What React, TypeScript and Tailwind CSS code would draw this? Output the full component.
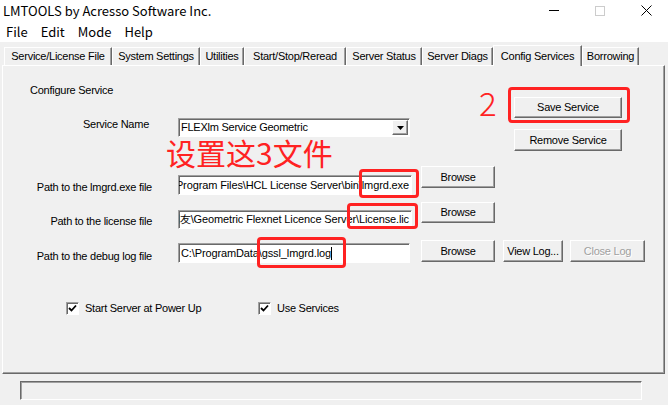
import React from "react";

const ui = "font-['Liberation_Sans',Arial,sans-serif]";
const raised =
  "border border-t-white border-l-white border-r-[#696969] border-b-[#696969] shadow-[inset_-1px_-1px_0_#a0a0a0] bg-[#f0f0f0]";
const sunken =
  "border border-t-[#a0a0a0] border-l-[#a0a0a0] border-r-white border-b-white shadow-[inset_1px_1px_0_#696969] bg-white";

const tabs = [
  { label: "Service/License File", w: "w-[108px]" },
  { label: "System Settings", w: "w-[88px]" },
  { label: "Utilities", w: "w-[44px]" },
  { label: "Start/Stop/Reread", w: "w-[102px]" },
  { label: "Server Status", w: "w-[76px]" },
  { label: "Server Diags", w: "w-[71px]" },
  { label: "Config Services", w: "w-[89px]", active: true },
  { label: "Borrowing", w: "w-[57px]" },
];

const Btn = ({
  children,
  className = "",
  disabled = false,
}: {
  children: React.ReactNode;
  className?: string;
  disabled?: boolean;
}) => (
  <div
    className={`${raised} flex items-center justify-center text-[11px] shrink-0 ${
      disabled ? "text-[#a0a0a0] [text-shadow:1px_1px_0_#ffffff]" : "text-black"
    } ${className}`}
  >
    {children}
  </div>
);

const Check = ({ label, className = "" }: { label: string; className?: string }) => (
  <div className={`flex items-center ${className}`}>
    <div className={`${sunken} w-[13px] h-[13px] flex items-center justify-center`}>
      <svg width="9" height="9" viewBox="0 0 9 9">
        <path d="M1 4 L3.5 6.5 L8 1.5" stroke="#000" strokeWidth="1.8" fill="none" />
      </svg>
    </div>
    <span className="ml-[6px] text-[11px]">{label}</span>
  </div>
);

const PathRow = ({
  label,
  value,
  rowH,
  labelMt,
  inputMt,
  inputH,
  btnH,
}: {
  label: string;
  value: string;
  rowH: string;
  labelMt: string;
  inputMt: string;
  inputH: string;
  btnH: string;
}) => (
  <div className={`flex items-start ${rowH}`}>
    <div className={`w-[149px] text-right text-[11px] leading-[13px] ${labelMt}`}>{label}</div>
    <div
      className={`${sunken} ml-[26px] w-[234px] ${inputH} ${inputMt} overflow-hidden flex justify-end items-center`}
    >
      <span className="whitespace-nowrap text-[11px] tracking-[-0.12px] pr-[2px]">{value}</span>
    </div>
    <Btn className={`ml-[9px] w-[74px] ${btnH}`}>Browse</Btn>
  </div>
);

export default function App() {
  return (
    <div
      className={`relative w-[668px] h-[405px] bg-[#f0f0f0] overflow-hidden text-black tracking-[-0.25px] ${ui}`}
    >
      {/* title + menu */}
      <div className="bg-white h-[42px] flex flex-col tracking-normal font-['Noto_Sans_CJK_SC',sans-serif]">
        <div className="h-[21px] flex items-center justify-between">
          <span className="ml-[3px] text-[13px]">LMTOOLS by Acresso Software Inc.</span>
          <div className="flex items-center h-full">
            <div className="w-[10px] h-[1px] bg-black mr-[36px]" />
            <div className="w-[10px] h-[10px] border border-[#cccccc] mr-[36px]" />
            <svg width="11" height="11" viewBox="0 0 11 11" className="mr-[16px]">
              <path d="M0.5 0.5 L10.5 10.5 M10.5 0.5 L0.5 10.5" stroke="#000" strokeWidth="1" />
            </svg>
          </div>
        </div>
        <div className="h-[21px] flex items-center gap-[13px] pl-[6px] text-[13px]">
          <span>File</span>
          <span>Edit</span>
          <span>Mode</span>
          <span>Help</span>
        </div>
      </div>

      {/* tabs */}
      <div className="h-[23px] flex items-end pl-[4px]">
        {tabs.map((t) =>
          t.active ? (
            <div
              key={t.label}
              className={`${t.w} h-[21px] -mb-[1px] relative z-10 bg-[#f0f0f0] border-t border-l border-white border-r border-r-[#696969] shadow-[inset_-1px_0_0_#a0a0a0] flex items-start justify-center pt-[2px] text-[11px]`}
            >
              {t.label}
            </div>
          ) : (
            <div
              key={t.label}
              className={`${t.w} h-[18px] border-t border-l border-white border-r border-r-[#696969] shadow-[inset_-1px_0_0_#a0a0a0] flex items-center justify-center text-[11px]`}
            >
              {t.label}
            </div>
          )
        )}
      </div>

      {/* panel */}
      <div className="ml-[2px] w-[663px] h-[309px] border border-t-white border-l-white border-r-[#696969] border-b-[#696969] shadow-[inset_-1px_-1px_0_#a0a0a0] flex flex-col">
        <div className="h-[100px] flex">
          <div className="flex-1 flex flex-col">
            <div className="ml-[27px] mt-[18px] text-[11px] leading-[13px]">Configure Service</div>
            <div className="mt-[21px] flex items-start">
              <div className="w-[146px] text-right text-[11px] leading-[13px]">Service Name</div>
              <div className={`${sunken} ml-[29px] w-[232px] h-[19px] flex items-center justify-between`}>
                <span className="pl-[2px] text-[11px]">FLEXlm Service Geometric</span>
                <div className={`${raised} w-[16px] h-[15px] flex items-center justify-center mr-[1px]`}>
                  <svg width="7" height="4" viewBox="0 0 7 4">
                    <path d="M0 0 H7 L3.5 4 Z" fill="#000" />
                  </svg>
                </div>
              </div>
            </div>
          </div>
          <div className="w-[108px] mr-[42px] flex flex-col">
            <Btn className="mt-[31px] h-[21px] w-[108px]">Save Service</Btn>
            <Btn className="mt-[11px] h-[22px] w-[108px]">Remove Service</Btn>
          </div>
        </div>

        <PathRow
          label="Path to the lmgrd.exe file"
          value="C:\Program Files\HCL License Server\bin\lmgrd.exe"
          rowH="h-[36px]"
          labelMt="mt-[15px]"
          inputMt="mt-[9px]"
          inputH="h-[20px]"
          btnH="h-[22px]"
        />
        <PathRow
          label="Path to the license file"
          value="C:\朋友\Geometric Flexnet Licence Server\License.lic"
          rowH="h-[38px]"
          labelMt="mt-[13px]"
          inputMt="mt-[8px]"
          inputH="h-[19px]"
          btnH="h-[21px]"
        />

        <div className="flex items-start h-[22px]">
          <div className="w-[149px] text-right text-[11px] leading-[13px] mt-[10px]">
            Path to the debug log file
          </div>
          <div className={`${sunken} ml-[26px] w-[232px] h-[20px] mt-[3px] flex items-center`}>
            <span className="pl-[2px] text-[11px] tracking-[-0.12px] whitespace-nowrap">
              C:\ProgramData\gssl_lmgrd.log
            </span>
            <span className="w-[1px] h-[13px] bg-black" />
          </div>
          <Btn className="ml-[11px] w-[74px] h-[22px]">Browse</Btn>
          <Btn className="ml-[8px] w-[60px] h-[22px]">View Log...</Btn>
          <Btn className="ml-[7px] w-[75px] h-[22px]" disabled>
            Close Log
          </Btn>
        </div>

        <div className="mt-[38px] flex">
          <Check label="Start Server at Power Up" className="ml-[63px] w-[192px]" />
          <Check label="Use Services" />
        </div>
      </div>

      {/* status bar */}
      <div className="mt-[7px] ml-[20px] w-[622px] h-[19px] border border-t-[#696969] border-l-[#696969] border-r-white border-b-white shadow-[inset_1px_1px_0_#a0a0a0]" />

      {/* annotations */}
      <div className="absolute left-[166px] top-[137px] text-[30px] leading-none tracking-normal text-[#ff2222] font-['Noto_Sans_CJK_SC',sans-serif]">
        设置这3文件
      </div>
      <div className="absolute left-[479px] top-[86px] text-[33px] leading-none tracking-normal text-[#ff2222] font-['Noto_Sans_CJK_SC',sans-serif] font-light">
        2
      </div>
      <div className="absolute left-[508px] top-[87px] w-[122px] h-[36px] border-[3px] border-[#ff2222] rounded-[4px]" />
      <div className="absolute left-[359px] top-[169px] w-[60px] h-[29px] border-[3px] border-[#ff2222] rounded-[4px]" />
      <div className="absolute left-[347px] top-[203px] w-[71px] h-[26px] border-[3px] border-[#ff2222] rounded-[4px]" />
      <div className="absolute left-[257px] top-[237px] w-[89px] h-[31px] border-[3px] border-[#ff2222] rounded-[4px]" />
    </div>
  );
}
